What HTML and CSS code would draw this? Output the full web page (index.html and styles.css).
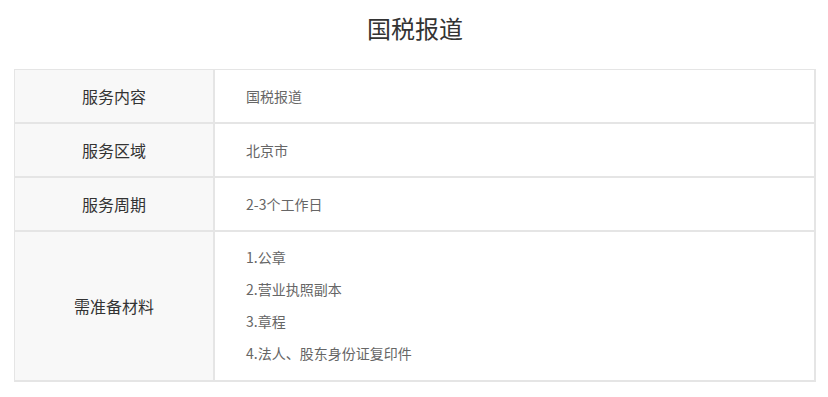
FILE: index.html
```html
<!DOCTYPE html>
<html lang="zh-CN">
<head>
<meta charset="utf-8">
<title>国税报道</title>
<link rel="stylesheet" href="styles.css">
</head>
<body>
<div class="page">
  <h2 class="title">国税报道</h2>
  <table class="info">
    <tr>
      <th class="label">服务内容</th>
      <td class="value">国税报道</td>
    </tr>
    <tr>
      <th class="label">服务区域</th>
      <td class="value">北京市</td>
    </tr>
    <tr>
      <th class="label">服务周期</th>
      <td class="value">2-3个工作日</td>
    </tr>
    <tr>
      <th class="label">需准备材料</th>
      <td class="value list">
        <p>1.公章</p>
        <p>2.营业执照副本</p>
        <p>3.章程</p>
        <p>4.法人、股东身份证复印件</p>
      </td>
    </tr>
  </table>
</div>
</body>
</html>
```
FILE: styles.css
```css
* { box-sizing: border-box; }
html, body { margin: 0; padding: 0; background: #fff; }
body {
  font-family: "Microsoft YaHei", "Noto Sans CJK SC", "Noto Sans", sans-serif;
  color: #333;
}
.page {
  width: 802px;
  margin-left: 14px;
}
.title {
  margin: 0 0 13px;
  height: 56px;
  line-height: 56px;
  text-align: center;
  font-size: 24px;
  font-weight: normal;
  color: #333;
}
.info {
  width: 802px;
  border-collapse: separate;
  border-spacing: 0;
  border-right: 1px solid #e5e5e5;
  border-bottom: 1px solid #e5e5e5;
}
.info th, .info td {
  border: 1px solid #e5e5e5;
  height: 54px;
  padding: 0;
}
.label {
  width: 200px;
  background: #f8f8f8;
  font-size: 16px;
  font-weight: normal;
  color: #333;
  text-align: center;
}
.value {
  padding: 0 0 1px 31px !important;
  font-size: 14px;
  color: #666;
  text-align: left;
}
.list {
  padding-top: 9px !important;
  padding-bottom: 11px !important;
}
.list p {
  margin: 0;
  line-height: 32px;
}
```
